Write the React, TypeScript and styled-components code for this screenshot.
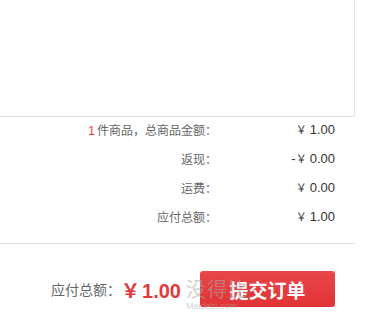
import React from 'react';
import styled, { createGlobalStyle } from 'styled-components';

const GlobalStyle = createGlobalStyle`
    html, body {
        margin: 0;
        padding: 0;
        background: #fff;
    }
    body {
        font-family: "Liberation Sans", Arial, "Noto Sans CJK SC", sans-serif;
    }
`;

const Page = styled.div`
    width: 371px;
    height: 329px;
    overflow: hidden;
    position: relative;
`;

const ItemsBox = styled.div`
    width: 354px;
    height: 116px;
    border-right: 1px solid #e6e6e6;
    border-bottom: 1px solid #e6e6e6;
`;

const Summary = styled.div`
    width: 355px;
    display: flex;
    flex-direction: column;
    gap: 5px;
    padding-bottom: 15px;
    border-bottom: 1px solid #e6e6e6;
`;

const Row = styled.div`
    display: flex;
    justify-content: flex-end;
    align-items: center;
    height: 24px;
    padding-right: 20px;
    font-size: 12px;
`;

const Label = styled.span`
    color: #666;
    font-family: "Noto Sans CJK SC", sans-serif;
    text-align: right;
`;

const Count = styled.em`
    font-style: normal;
    color: #e4393c;
    font-family: "Liberation Sans", Arial, sans-serif;
    margin-right: 2px;
`;

const Value = styled.span`
    width: 118px;
    text-align: right;
    color: #333;
    font-family: "Liberation Sans", Arial, sans-serif;
    font-size: 13px;
`;

const Yen = styled.span`
    font-family: "Noto Sans CJK SC", sans-serif;
    font-size: 11px;
    margin-right: 3px;
`;

const Footer = styled.div`
    width: 355px;
    display: flex;
    justify-content: flex-end;
    align-items: center;
    padding-top: 27px;
    padding-right: 20px;
    box-sizing: border-box;
`;

const TotalLabel = styled.span`
    font-family: "Noto Sans CJK SC", sans-serif;
    font-size: 14px;
    color: #666;
`;

const TotalPrice = styled.span`
    color: #e4393c;
    font-weight: bold;
    font-size: 20px;
    font-family: "Liberation Sans", Arial, sans-serif;
    margin-right: 19px;
`;

const BigYen = styled.span`
    font-family: "Noto Sans CJK SC", sans-serif;
    font-size: 19px;
    font-weight: bold;
    margin-right: 2px;
`;

const SubmitButton = styled.button`
    width: 135px;
    height: 36px;
    border: 0;
    border-radius: 3px;
    background: linear-gradient(#e8464a, #e13336);
    color: #fff;
    font-family: "Noto Sans CJK SC", sans-serif;
    font-size: 19px;
    font-weight: bold;
    padding: 0;
    cursor: pointer;
`;

const Watermark = styled.div`
    position: absolute;
    left: 186px;
    top: 277px;
    pointer-events: none;
    color: rgba(170, 170, 170, 0.55);
    display: flex;
    flex-direction: column;
    align-items: flex-start;
`;

const MarkTitle = styled.span`
    font-family: "Noto Sans CJK SC", sans-serif;
    font-size: 20px;
    line-height: 24px;
    letter-spacing: 1px;
`;

const MarkSite = styled.span`
    font-family: "Liberation Sans", Arial, sans-serif;
    font-size: 9px;
    line-height: 10px;
`;

const rows = [
    { label: '件商品，总商品金额：', count: 1, sign: '', value: '1.00' },
    { label: '返现：', sign: '-', value: '0.00' },
    { label: '运费：', sign: '', value: '0.00' },
    { label: '应付总额：', sign: '', value: '1.00' },
];

export default function App() {
    return (
        <Page>
            <GlobalStyle />
            <ItemsBox />
            <Summary>
                {rows.map(({ label, count, sign, value }) => (
                    <Row key={label}>
                        <Label>
                            {count !== undefined && <Count>{count}</Count>}
                            {label}
                        </Label>
                        <Value>
                            {sign}
                            <Yen>￥</Yen>
                            {value}
                        </Value>
                    </Row>
                ))}
            </Summary>
            <Footer>
                <TotalLabel>应付总额：</TotalLabel>
                <TotalPrice>
                    <BigYen>￥</BigYen>1.00
                </TotalPrice>
                <SubmitButton type="button">提交订单</SubmitButton>
            </Footer>
            <Watermark>
                <MarkTitle>没得比</MarkTitle>
                <MarkSite>Meidebi.com</MarkSite>
            </Watermark>
        </Page>
    );
}
